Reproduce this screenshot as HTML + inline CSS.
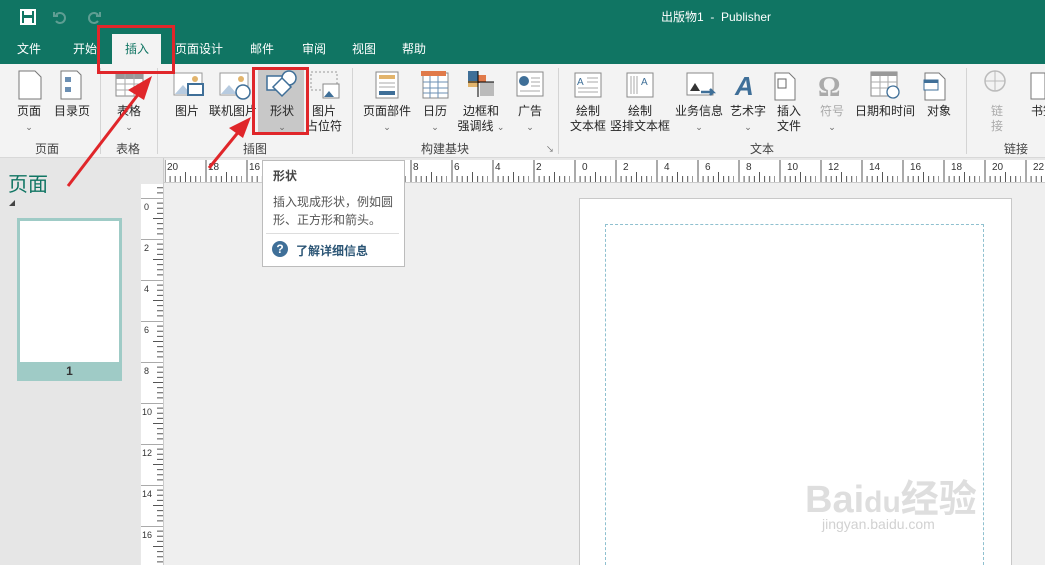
<!DOCTYPE html>
<html style="overflow:hidden;width:1045px;height:565px"><head><meta charset="utf-8"><style>
*{margin:0;padding:0;box-sizing:border-box}
body{width:1045px;height:565px;overflow:hidden;position:relative;background:#efefef;font-family:"Liberation Sans","Noto Sans CJK SC",sans-serif;font-size:12px;color:#333}
.a{position:absolute}
.t{position:absolute;white-space:nowrap;text-align:center;font-size:12px;color:#262626;line-height:15px}
.tab{position:absolute;top:40px;color:#fff;font-size:12px}
.ch{font-size:9px;color:#666}
.sep{position:absolute;top:68px;width:1px;height:86px;background:#d4d4d4}
.g{position:absolute;top:140px;font-size:12px;color:#444;text-align:center;white-space:nowrap}
</style></head><body>
<div class="a" style="left:0;top:0;width:1045px;height:64px;background:#107563"></div>
<svg class="a" style="left:18px;top:7px" width="110" height="20">
<rect x="3" y="3" width="14" height="14" fill="none" stroke="#fff" stroke-width="2"/><rect x="6" y="3" width="8" height="5" fill="#fff"/><rect x="6" y="11" width="8" height="6" fill="#fff"/>
<path d="M38 8 a5 5 0 1 1 0 6 M36 5 v4 h4" stroke="#5f9e93" stroke-width="2" fill="none"/>
<path d="M80 8 a5 5 0 1 0 0 6 M82 5 v4 h-4" stroke="#5f9e93" stroke-width="2" fill="none"/>
<path d="M112 8 h6 M112 11 l3 3 l3 -3z" stroke="#fff" fill="#fff"/>
</svg>
<div class="a" style="left:661px;top:8px;color:#fff;font-size:12px">出版物1 &nbsp;- &nbsp;Publisher</div>
<div class="a" style="left:112px;top:34px;width:49px;height:30px;background:#f3f3f3"></div>
<div class="tab" style="left:17px">文件</div>
<div class="tab" style="left:73px">开始</div>
<div class="tab" style="left:125px;color:#107563">插入</div>
<div class="tab" style="left:175px">页面设计</div>
<div class="tab" style="left:250px">邮件</div>
<div class="tab" style="left:302px">审阅</div>
<div class="tab" style="left:352px">视图</div>
<div class="tab" style="left:402px">帮助</div>
<div class="a" style="left:0;top:64px;width:1045px;height:94px;background:#f3f3f3;border-bottom:1px solid #d8d8d8"></div>
<div class="a" style="left:258px;top:68px;width:46px;height:64px;background:#c8c8c8"></div>
<svg class="a" style="left:0;top:66px" width="1045" height="40">
<path d="M19 5h16l6 6v22h-22z" fill="#fff" stroke="#777"/>
<path d="M61 5h16l4 4v24h-20z" fill="#fff" stroke="#777"/><rect x="65" y="11" width="6" height="5" fill="#6b8fb3"/><rect x="65" y="21" width="6" height="5" fill="#6b8fb3"/>
<rect x="116" y="8" width="27" height="22" fill="#fff" stroke="#888"/><rect x="116" y="8" width="27" height="5" fill="#999"/><path d="M116 18h27M116 24h27M125 8v22M134 8v22" stroke="#aaa"/>
<rect x="174" y="7" width="28" height="22" fill="#fff" stroke="#999"/><path d="M175 28l8-9 8 9z" fill="#b7cbe0"/><circle cx="195" cy="13" r="3" fill="#e2b46c"/><rect x="188" y="18" width="15" height="11" fill="#fff" stroke="#3f6f98" stroke-width="2"/>
<rect x="220" y="7" width="28" height="22" fill="#fff" stroke="#999"/><path d="M221 28l8-9 8 9z" fill="#b7cbe0"/><circle cx="241" cy="13" r="3" fill="#e2b46c"/><circle cx="243" cy="26" r="7" fill="#fff" stroke="#3f6f98" stroke-width="1.5"/>
<rect x="267" y="10" width="16" height="14" fill="#fff" stroke="#3f6f98" stroke-width="1.5"/><circle cx="289" cy="12" r="7" fill="#fff" stroke="#3f6f98" stroke-width="1.5"/><path d="M282 12l9 9-9 9-9-9z" fill="#fff" stroke="#3f6f98" stroke-width="1.5"/>
<rect x="311" y="6" width="26" height="18" fill="none" stroke="#999" stroke-dasharray="2 2"/><rect x="323" y="18" width="16" height="14" fill="#fff" stroke="#888"/><path d="M324 31l5-6 5 6z" fill="#3f6f98"/>
<rect x="376" y="6" width="22" height="26" fill="#fff" stroke="#888"/><rect x="379" y="9" width="16" height="4" fill="#e2b46c"/><rect x="379" y="25" width="16" height="4" fill="#3f6f98"/><path d="M379 17h16M379 21h16" stroke="#aaa"/>
<rect x="423" y="7" width="25" height="25" fill="#fff" stroke="#888"/><rect x="421" y="5" width="25" height="5" fill="#e07a4a"/><path d="M423 16h25M423 22h25M423 27h25M430 10v22M438 10v22" stroke="#6b8fb3"/>
<rect x="468" y="5" width="10" height="10" fill="#3f6f98"/><rect x="478" y="9" width="8" height="8" fill="#e07a4a"/><rect x="480" y="16" width="14" height="14" fill="#bbb"/><rect x="468" y="15" width="10" height="6" fill="#e2b46c"/><path d="M478 5v26M468 16h26" stroke="#000"/>
<rect x="517" y="6" width="26" height="24" fill="#fff" stroke="#888"/><circle cx="524" cy="15" r="5" fill="#3f6f98"/><path d="M531 12h9M531 16h9M531 20h9M520 25h20" stroke="#aaa"/>
<rect x="575" y="7" width="26" height="24" fill="#fff" stroke="#888"/><text x="577" y="19" font-size="10" fill="#3f6f98">A</text><path d="M587 12h11M587 16h11M578 22h20M578 26h20" stroke="#aaa"/>
<rect x="627" y="7" width="26" height="24" fill="#fff" stroke="#888"/><path d="M631 10v18M634 10v18M637 10v18" stroke="#aaa"/><text x="641" y="19" font-size="10" fill="#3f6f98">A</text>
<rect x="687" y="7" width="26" height="22" fill="#fff" stroke="#888"/><path d="M690 25l5-8 5 8z" fill="#333"/><path d="M701 26h12l-3-3M713 26l-3 3" stroke="#3f6f98" stroke-width="2.5" fill="none"/>
<text x="735" y="29" font-size="26" font-weight="bold" font-style="italic" fill="#3f6f98">A</text>
<path d="M775 7h14l6 6v21h-20z" fill="#fff" stroke="#777"/><rect x="778" y="13" width="8" height="9" fill="none" stroke="#666"/>
<text x="818" y="30" font-size="28" font-weight="bold" fill="#aaa" font-family="Liberation Serif">Ω</text>
<rect x="871" y="6" width="26" height="24" fill="#fff" stroke="#888"/><rect x="871" y="6" width="26" height="4" fill="#999"/><path d="M871 16h26M871 22h26M880 10v20M888 10v20" stroke="#aaa"/><circle cx="893" cy="26" r="6" fill="#fff" stroke="#3f6f98" stroke-width="1.3"/>
<path d="M925 7h14l6 6v21h-20z" fill="#fff" stroke="#777"/><rect x="924" y="14" width="14" height="10" fill="#fff" stroke="#3f6f98"/><rect x="924" y="14" width="14" height="3" fill="#3f6f98"/>
<circle cx="995" cy="15" r="10" fill="none" stroke="#bbb" stroke-width="1.5"/><path d="M985 15h20M995 5v20" stroke="#bbb"/>
<path d="M1031 7h14v26h-14z" fill="#fff" stroke="#777"/>
</svg>
<div class="t" style="left:12px;top:104px;width:34px">页面<br><span class="ch">⌄</span></div>
<div class="t" style="left:52px;top:104px;width:40px">目录页</div>
<div class="t" style="left:111px;top:104px;width:36px">表格<br><span class="ch">⌄</span></div>
<div class="t" style="left:170px;top:104px;width:34px">图片</div>
<div class="t" style="left:208px;top:104px;width:50px">联机图片</div>
<div class="t" style="left:262px;top:104px;width:40px">形状<br><span class="ch">⌄</span></div>
<div class="t" style="left:305px;top:104px;width:38px">图片<br>占位符</div>
<div class="t" style="left:360px;top:104px;width:54px">页面部件<br><span class="ch">⌄</span></div>
<div class="t" style="left:418px;top:104px;width:34px">日历<br><span class="ch">⌄</span></div>
<div class="t" style="left:455px;top:104px;width:52px">边框和<br>强调线 <span class="ch">⌄</span></div>
<div class="t" style="left:513px;top:104px;width:34px">广告<br><span class="ch">⌄</span></div>
<div class="t" style="left:566px;top:104px;width:44px">绘制<br>文本框</div>
<div class="t" style="left:610px;top:104px;width:60px">绘制<br>竖排文本框</div>
<div class="t" style="left:672px;top:104px;width:54px">业务信息<br><span class="ch">⌄</span></div>
<div class="t" style="left:727px;top:104px;width:42px">艺术字<br><span class="ch">⌄</span></div>
<div class="t" style="left:772px;top:104px;width:34px">插入<br>文件</div>
<div class="t" style="left:815px;top:104px;width:34px;color:#aaa">符号<br><span class="ch">⌄</span></div>
<div class="t" style="left:853px;top:104px;width:64px">日期和时间</div>
<div class="t" style="left:922px;top:104px;width:34px">对象</div>
<div class="t" style="left:982px;top:104px;width:30px;color:#aaa">链<br>接</div>
<div class="t" style="left:1026px;top:104px;width:34px">书签</div>
<div class="g" style="left:35px">页面</div>
<div class="g" style="left:116px">表格</div>
<div class="g" style="left:243px">插图</div>
<div class="g" style="left:421px">构建基块</div>
<div class="g" style="left:750px">文本</div>
<div class="g" style="left:1004px">链接</div>
<div class="a" style="left:546px;top:144px;font-size:8px;color:#666">↘</div>
<div class="sep" style="left:100px"></div><div class="sep" style="left:157px"></div><div class="sep" style="left:352px"></div><div class="sep" style="left:558px"></div><div class="sep" style="left:966px"></div>
<div class="a" style="left:0;top:158px;width:140px;height:407px;background:#e6e6e6"></div>
<div class="a" style="left:8px;top:168px;font-size:20px;color:#107563">页面</div>
<div class="a" style="left:9px;top:200px;width:0;height:0;border-left:6px solid transparent;border-bottom:6px solid #444"></div>
<div class="a" style="left:17px;top:218px;width:105px;height:163px;background:#9fcbc6"></div>
<div class="a" style="left:20px;top:221px;width:99px;height:141px;background:#fff"></div>
<div class="a" style="left:17px;top:364px;width:105px;text-align:center;font-weight:bold;font-size:12px">1</div>
<div class="a" style="left:140px;top:158px;width:905px;height:25px;background:#e8e8e8;border-bottom:1px solid #ccc"></div>
<div class="a" style="left:140px;top:158px;width:24px;height:407px;background:#e8e8e8;border-right:1px solid #ccc"></div>
<svg class="a" style="left:165px;top:160px" width="880" height="22">
<defs><pattern id="ph" x="-5" width="41" height="22" patternUnits="userSpaceOnUse"><path d="M5 0v22M10.1 16v6M15.2 16v6M20.4 16v6M25.5 12v10M30.6 16v6M35.7 16v6M40.9 16v6" stroke="#555" stroke-width="1"/></pattern></defs>
<rect width="880" height="22" fill="#fff"/><rect y="0" width="880" height="22" fill="url(#ph)"/>
<g font-size="10" fill="#333"><text x="2" y="10">20</text><text x="43" y="10">18</text><text x="84" y="10">16</text><text x="125" y="10">14</text><text x="166" y="10">12</text><text x="207" y="10">10</text><text x="248" y="10">8</text><text x="289" y="10">6</text><text x="330" y="10">4</text><text x="371" y="10">2</text><text x="417" y="10">0</text><text x="458" y="10">2</text><text x="499" y="10">4</text><text x="540" y="10">6</text><text x="581" y="10">8</text><text x="622" y="10">10</text><text x="663" y="10">12</text><text x="704" y="10">14</text><text x="745" y="10">16</text><text x="786" y="10">18</text><text x="827" y="10">20</text><text x="868" y="10">22</text></g>
</svg>
<svg class="a" style="left:141px;top:184px" width="22" height="381">
<defs><pattern id="pv" y="14" width="22" height="41" patternUnits="userSpaceOnUse"><path d="M0 0h22M16 5.1h6M16 10.2h6M16 15.4h6M12 20.5h10M16 25.6h6M16 30.7h6M16 35.9h6" stroke="#555"/></pattern></defs>
<rect width="22" height="381" fill="#fff"/><rect width="22" height="381" fill="url(#pv)"/>
<g font-size="9" fill="#333"><text x="3" y="26">0</text><text x="3" y="67">2</text><text x="3" y="108">4</text><text x="3" y="149">6</text><text x="3" y="190">8</text><text x="1" y="231">10</text><text x="1" y="272">12</text><text x="1" y="313">14</text><text x="1" y="354">16</text></g>
</svg>
<div class="a" style="left:579px;top:198px;width:433px;height:367px;background:#fff;border:1px solid #c8c8c8;border-bottom:none"></div>
<div class="a" style="left:605px;top:224px;width:379px;height:341px;border:1px dashed #8fc0cf;border-bottom:none"></div>
<div class="a" style="left:805px;top:468px;font-size:38px;font-weight:bold;color:rgba(200,200,200,.6)">Bai<span style="font-size:30px">du</span>经验</div>
<div class="a" style="left:822px;top:516px;font-size:14px;color:rgba(190,190,190,.7)">jingyan.baidu.com</div>
<div class="a" style="left:262px;top:160px;width:143px;height:107px;background:#fff;border:1px solid #bcbcbc"></div>
<div class="a" style="left:273px;top:167px;font-size:12px;font-weight:bold;color:#444">形状</div>
<div class="a" style="left:273px;top:193px;font-size:12px;color:#555;line-height:18px">插入现成形状，例如圆<br>形、正方形和箭头。</div>
<div class="a" style="left:266px;top:233px;width:133px;height:1px;background:#ddd"></div>
<div class="a" style="left:272px;top:241px;width:16px;height:16px;border-radius:50%;background:#3f6f98;color:#fff;font-size:12px;font-weight:bold;text-align:center;line-height:16px">?</div>
<div class="a" style="left:296px;top:242px;font-size:12px;font-weight:bold;color:#2b5575">了解详细信息</div>
<div class="a" style="left:97px;top:25px;width:78px;height:49px;border:3px solid #e0262a"></div>
<div class="a" style="left:252px;top:67px;width:57px;height:68px;border:3px solid #e0262a"></div>
<svg class="a" style="left:0;top:0" width="1045" height="565">
<path d="M68 186L140 92" stroke="#e0262a" stroke-width="3"/><path d="M152 76L128 90L144 100z" fill="#e0262a"/>
<path d="M209 168L240 130" stroke="#e0262a" stroke-width="3"/><path d="M251 117L229 128L243 138z" fill="#e0262a"/>
</svg>
</body></html>
